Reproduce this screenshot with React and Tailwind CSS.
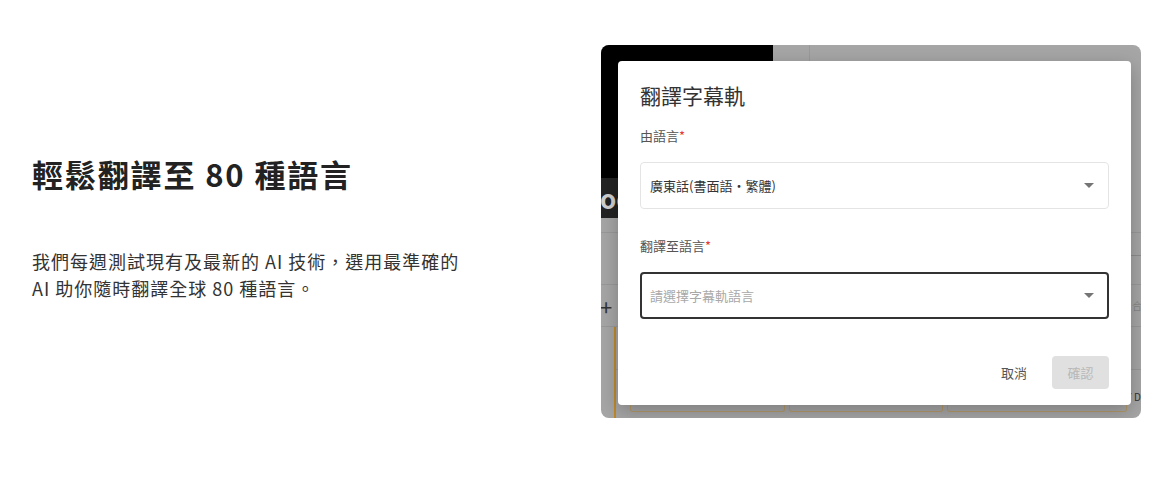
const font = { fontFamily: '"Noto Sans CJK TC", "Noto Sans", sans-serif' }

function Caret() {
  return (
    <svg width="10" height="5" viewBox="0 0 10 5" className="shrink-0">
      <path d="M0 0h10L5 5z" fill="#757575" />
    </svg>
  )
}

function Field({ label, value, placeholder, focused }) {
  return (
    <div className="flex flex-col">
      <div className="text-[13px] leading-[18px] text-[#555]">
        {label}
        <span className="text-[#e53935]">*</span>
      </div>
      <div
        className={
          focused
            ? 'mt-[17px] flex h-[47px] items-center justify-between rounded-[4px] border-2 border-[#333] pl-[8px] pr-[13px]'
            : 'mt-[17px] flex h-[47px] items-center justify-between rounded-[4px] border border-[#e4e4e4] pl-[9px] pr-[14px]'
        }
      >
        <span className={value ? 'text-[13px] text-[#333]' : 'text-[13px] text-[#a8a8a8]'}>{value || placeholder}</span>
        <Caret />
      </div>
    </div>
  )
}

// dimmed app screenshot behind the dialog
function BackdropApp() {
  return (
    <div className="flex h-full flex-col bg-[#a6a6a6]">
      <div className="flex h-[133px] shrink-0">
        <div className="w-[172px] bg-black" />
        <div className="w-[37px] border-r border-[#9a9a9a]" />
      </div>
      <div className="flex h-[40px] w-[172px] shrink-0 items-center overflow-hidden bg-[#232323]">
        <span className="ml-[-1px] text-[26px] font-semibold leading-none text-[#d0d0d0]">oc</span>
      </div>
      <div className="h-[15px] shrink-0 border-b border-[#999]" />
      <div className="flex h-[52px] shrink-0 justify-end border-b border-[#999]">
        <div className="mt-[22px] w-[14px] border-t border-[#8d8d8d]" />
      </div>
      <div className="flex h-[42px] shrink-0 items-center justify-between border-b border-[#999]">
        <span className="ml-[-1px] text-[22px] leading-none text-[#333]">+</span>
        <span className="mr-[-1px] text-[10px] text-[#888]">合</span>
      </div>
      <div className="flex flex-1">
        <div className="ml-[13px] w-[2px] bg-[#c08a2a]" />
        <div className="flex flex-1 flex-col">
          <div className="h-[43px] border-b border-[#999]" />
          <div className="flex h-[32px] items-end justify-end">
            <span className="text-[10px] leading-none text-[#333]">7 D</span>
          </div>
          <div className="mx-[14px] flex h-[10px] gap-[4px]">
            <div className="flex-1 rounded-b-[3px] border border-t-0 border-[#b59a6a]" />
            <div className="flex-1 rounded-b-[3px] border border-t-0 border-[#b59a6a]" />
            <div className="w-[180px] rounded-b-[3px] border border-t-0 border-[#b59a6a]" />
          </div>
        </div>
      </div>
    </div>
  )
}

export default function App() {
  return (
    <div style={font} className="flex h-[498px] w-[1173px] items-start bg-white">
      <div className="w-[601px] shrink-0 pl-[32px] pt-[154px]">
        <h1 className="text-[31px] font-bold leading-[40px] tracking-[0.06em] text-[#222]">輕鬆翻譯至 80 種語言</h1>
        <p className="mt-[54px] text-[18px] leading-[27px] tracking-[1px] text-[#333]">
          我們每週測試現有及最新的 AI 技術，選用最準確的
          <br />
          AI 助你隨時翻譯全球 80 種語言。
        </p>
      </div>
      <div className="relative mt-[45px] h-[373px] w-[540px] shrink-0 overflow-hidden rounded-[8px]">
        <BackdropApp />
        <div className="absolute left-[17px] top-[16px] flex h-[344px] w-[513px] flex-col rounded-[4px] bg-white px-[22px] pt-[20px] shadow-[0_6px_20px_rgba(0,0,0,0.25)]">
          <h2 className="text-[21px] font-normal leading-[28px] text-[#333]">翻譯字幕軌</h2>
          <div className="mt-[18px] flex flex-col gap-[28px]">
            <Field label="由語言" value="廣東話(書面語・繁體)" />
            <Field label="翻譯至語言" placeholder="請選擇字幕軌語言" focused />
          </div>
          <div className="mt-[37px] flex items-center justify-end gap-[25px]">
            <button className="text-[13px] text-[#555]">取消</button>
            <button className="h-[33px] w-[57px] rounded-[4px] bg-[#e0e0e0] text-[13px] text-[#b8b8b8]">確認</button>
          </div>
        </div>
      </div>
    </div>
  )
}
